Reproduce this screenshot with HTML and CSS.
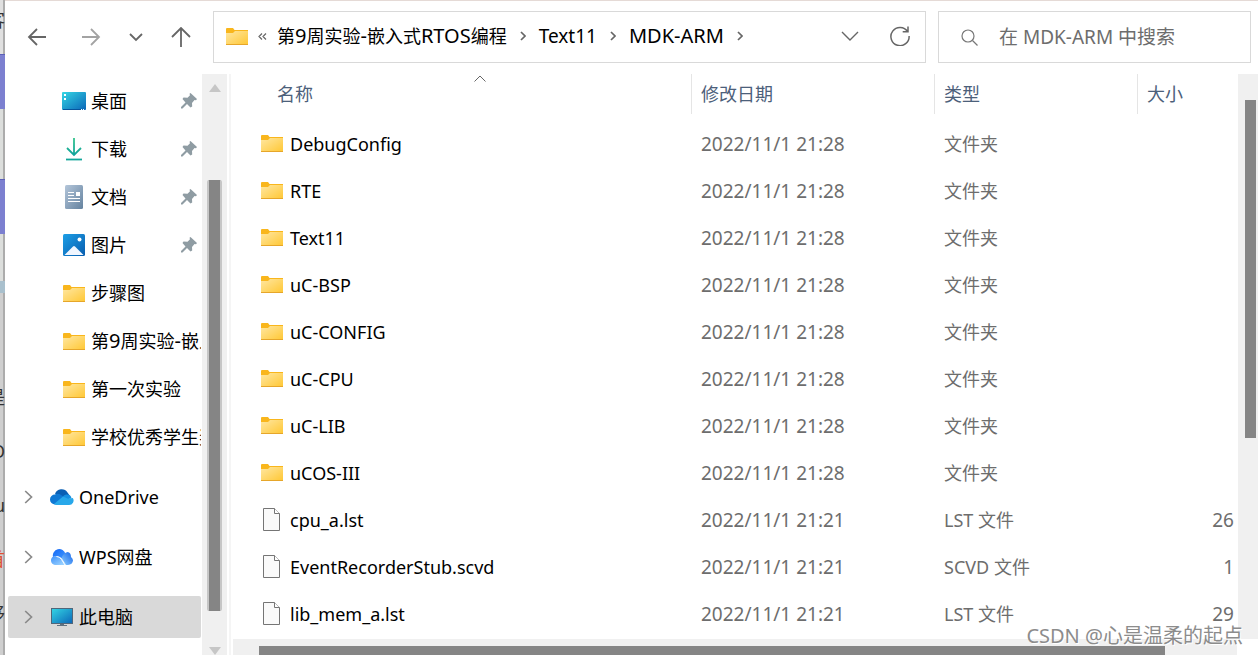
FILE: index.html
```
<!DOCTYPE html>
<html lang="zh-CN">
<head>
    <meta charset="UTF-8">
    <meta name="viewport" content="width=device-width, initial-scale=1.0">
    <title>MDK-ARM</title>
    <link rel="stylesheet" href="styles.css">
</head>
<body>
    <!-- Shared icons -->
    <svg class="sprite" width="0" height="0" aria-hidden="true">
        <defs>
            <linearGradient id="gFolder" x1="0" y1="0" x2="1" y2="1">
                <stop offset="0" stop-color="#ffe7a2"/><stop offset="1" stop-color="#ffc733"/>
            </linearGradient>
            <linearGradient id="gDesk" x1="0" y1="0" x2="1" y2="1">
                <stop offset="0" stop-color="#34d6e4"/><stop offset="1" stop-color="#0b66b8"/>
            </linearGradient>
            <linearGradient id="gDown" x1="0" y1="0" x2="0" y2="1">
                <stop offset="0" stop-color="#35c48d"/><stop offset="1" stop-color="#0fa39b"/>
            </linearGradient>
            <linearGradient id="gDoc" x1="0" y1="0" x2="1" y2="1">
                <stop offset="0" stop-color="#b4c6da"/><stop offset="1" stop-color="#64829f"/>
            </linearGradient>
            <linearGradient id="gPic" x1="0" y1="0" x2="1" y2="1">
                <stop offset="0" stop-color="#1d9fe6"/><stop offset="1" stop-color="#085cae"/>
            </linearGradient>
            <linearGradient id="gWps" x1="0" y1="0" x2="1" y2="1">
                <stop offset="0" stop-color="#1668f5"/><stop offset="1" stop-color="#3d97ff"/>
            </linearGradient>
            <linearGradient id="gWps2" x1="0" y1="0" x2="1" y2="1">
                <stop offset="0" stop-color="#3f92fb"/><stop offset="1" stop-color="#a8dbff"/>
            </linearGradient>
            <linearGradient id="gWps3" x1="1" y1="0" x2="0" y2="1">
                <stop offset="0" stop-color="#1263ea"/><stop offset="1" stop-color="#8fd0ff"/>
            </linearGradient>
        </defs>
        <symbol id="folder" viewBox="0 0 22 17">
            <path d="M0 1q0-1 1-1h6l1.500 2H22v4H0z" fill="#f9b61c"/>
            <path d="M0 5h7l2-2h13v14H0z" fill="url(#gFolder)"/>
            <path d="M0 16h22v1H0z" fill="#e6a62a"/>
        </symbol>
        <symbol id="file" viewBox="0 0 18 23">
            <path d="M.5.5h11l5 5v17H.5z" fill="#fafafa" stroke="#757575"/>
            <path d="M11.500.5v5h5" fill="#fff" stroke="#757575"/>
        </symbol>
        <symbol id="pin" viewBox="0 0 16 16">
            <path d="M9.500 0 16 6l-1 1.200-1.500-.2-2.500 3 .2 3.500-1.700 1L6 11l-4.500 4.500H0V14l4.500-4.500L1.500 6l1-1.500 4 .3L9 2.300 8.500.8z" fill="#8f9ca3"/>
        </symbol>
        <symbol id="chevron" viewBox="0 0 9 14">
            <path d="M1.200 1 7.500 7l-6.300 6" fill="none" stroke="#8a8a8a" stroke-width="1.700"/>
        </symbol>
        <symbol id="crumb" viewBox="0 0 6 10">
            <path d="m1 1 4 4-4 4" fill="none" stroke="#666" stroke-width="1.700"/>
        </symbol>
    </svg>

    <!-- Page behind the window -->
    <div class="backdrop" aria-hidden="true">
        <div class="slice slice-top"><span>客</span></div>
        <div class="slice slice-blue"></div>
        <div class="slice slice-gap"></div>
        <div class="slice slice-blue"></div>
        <div class="slice slice-gap"></div>
        <div class="slice slice-sky"></div>
        <div class="slice slice-text"><span>是</span><span>O</span><span>u</span><span class="red">首</span><span>移</span></div>
    </div>

    <div class="window">
        <header class="toolbar">
            <div class="nav">
                <button type="button" aria-label="后退">
                    <svg width="20" height="18" viewBox="0 0 20 18"><path d="M10 1 2 9l8 8M2 9h17" fill="none" stroke="#666" stroke-width="1.800"/></svg>
                </button>
                <button type="button" aria-label="前进">
                    <svg width="20" height="18" viewBox="0 0 20 18"><path d="m10 1 8 8-8 8m8-8H1" fill="none" stroke="#a3a3a3" stroke-width="1.800"/></svg>
                </button>
                <button type="button" class="nav-recent" aria-label="最近浏览的位置">
                    <svg width="14" height="9" viewBox="0 0 14 9"><path d="m1 1 6 6 6-6" fill="none" stroke="#666" stroke-width="1.800"/></svg>
                </button>
                <button type="button" aria-label="向上">
                    <svg width="20" height="20" viewBox="0 0 20 20"><path d="m1 10 9-9 9 9M10 1v19" fill="none" stroke="#666" stroke-width="1.800"/></svg>
                </button>
            </div>
            <div class="address">
                <svg class="icon-folder" width="22" height="17"><use href="#folder"/></svg>
                <svg class="more" width="9" height="7" viewBox="0 0 9 7"><path d="m4 .5-3 3 3 3m4-6-3 3 3 3" fill="none" stroke="#666" stroke-width="1.200"/></svg>
                <nav class="crumbs" aria-label="路径">
                    <a href="#">第<span class="latin">9</span>周实验<span class="latin">-</span>嵌入式<span class="latin">RTOS</span>编程</a>
                    <svg width="6" height="10"><use href="#crumb"/></svg>
                    <a href="#" class="latin-small">Text11</a>
                    <svg width="6" height="10"><use href="#crumb"/></svg>
                    <a href="#" class="latin">MDK-ARM</a>
                    <svg width="6" height="10"><use href="#crumb"/></svg>
                </nav>
                <button type="button" aria-label="以前的位置">
                    <svg width="18" height="10" viewBox="0 0 18 10"><path d="m1 1 8 8 8-8" fill="none" stroke="#666" stroke-width="1.400"/></svg>
                </button>
                <button type="button" aria-label="刷新">
                    <svg width="20" height="20" viewBox="0 0 20 20"><path d="M17.600 5.500A9.100 9.100 0 1 0 19.100 10M18 .5v5.300h-5.300" fill="none" stroke="#666" stroke-width="1.500"/></svg>
                </button>
            </div>
            <div class="search">
                <label for="search" aria-label="搜索">
                    <svg width="17" height="17" viewBox="0 0 17 17"><circle cx="7" cy="7" r="6" fill="none" stroke="#777" stroke-width="1.200"/><path d="m11.500 11.500 5 5" stroke="#777" stroke-width="1.200"/></svg>
                </label>
                <input type="text" id="search" placeholder="在 MDK-ARM 中搜索">
            </div>
        </header>

        <div class="content">
            <nav class="sidebar" aria-label="导航窗格">
                <ul class="quick">
                    <li><a href="#">
                        <svg width="24" height="18" viewBox="0 0 24 18"><rect width="24" height="18" rx="1" fill="url(#gDesk)"/><path d="M2 2h2v2H2zm0 4h2v2H2z" fill="#fff"/><path d="M1 17h18v1H1z" fill="#07549c"/><path d="M19 17h1v1h-1zm2 0h1v1h-1z" fill="#fff"/></svg>
                        <span>桌面</span><svg class="pin" width="16" height="16"><use href="#pin"/></svg></a></li>
                    <li><a href="#">
                        <svg width="24" height="24" viewBox="0 0 24 24"><path d="M12 1v17M5 11l7 7 7-7" fill="none" stroke="url(#gDown)" stroke-width="1.800"/><path d="M4 22.500h16" stroke="#12a69a" stroke-width="1.800"/></svg>
                        <span>下载</span><svg class="pin" width="16" height="16"><use href="#pin"/></svg></a></li>
                    <li><a href="#">
                        <svg width="24" height="24" viewBox="0 0 24 24"><rect x="3" width="18" height="24" rx="1.500" fill="url(#gDoc)"/><path d="M6 7.500h6M6 10.500h6M6 13.500h12M6 16.500h12" stroke="#fff"/><path d="M14 7h4v4h-4z" fill="#fff"/></svg>
                        <span>文档</span><svg class="pin" width="16" height="16"><use href="#pin"/></svg></a></li>
                    <li><a href="#">
                        <svg width="24" height="22" viewBox="0 0 24 22"><rect x="1" width="22" height="22" rx="1.500" fill="url(#gPic)"/><path d="m2.500 21 8.500-8.500q1-1 2 0L21.500 21z" fill="#f0f6ff"/><circle cx="17.500" cy="5.500" r="2" fill="#fff"/></svg>
                        <span>图片</span><svg class="pin" width="16" height="16"><use href="#pin"/></svg></a></li>
                    <li><a href="#"><svg class="icon-folder" width="24" height="17"><use href="#folder"/></svg><span>步骤图</span></a></li>
                    <li><a href="#"><svg class="icon-folder" width="24" height="17"><use href="#folder"/></svg><span>第<b class="latin">9</b>周实验<b class="latin">-</b>嵌入式RTOS编程</span></a></li>
                    <li><a href="#"><svg class="icon-folder" width="24" height="17"><use href="#folder"/></svg><span>第一次实验</span></a></li>
                    <li><a href="#"><svg class="icon-folder" width="24" height="17"><use href="#folder"/></svg><span>学校优秀学生奖</span></a></li>
                </ul>
                <ul class="places">
                    <li><a href="#">
                        <svg width="9" height="14"><use href="#chevron"/></svg>
                        <svg class="place-icon" width="24" height="16" viewBox="0 0 24 16"><path d="M5 5a7 7 0 0 1 12.500-1.500L20 7l-8 3-5-4z" fill="#0a5fb4"/><path d="M5 15.500A5 5 0 0 1 5 5.500q3-1.500 6 .5l7 4.500L7 15z" fill="#0f78d4"/><path d="M16 5.500q5-.5 5.500 4l-6 1L13 7.500q1-1.500 3-2z" fill="#178fe0"/><path d="M4 15q1 1 2.500 1H19a4.500 4.500 0 0 0 3.800-7L18 9.800 13 7.500z" fill="#28a8ea"/></svg>
                        <span>OneDrive</span></a></li>
                    <li><a href="#">
                        <svg width="9" height="14"><use href="#chevron"/></svg>
                        <svg class="place-icon" width="24" height="16" viewBox="0 0 24 16"><path d="M3 8a6.300 6.300 0 0 1 12.500-3L13 10q-5-4-10-2z" fill="url(#gWps)"/><path d="M11.500 9q2-5 6-6 3.500.5 3.500 5 2 1.500 2 3.500-.5 4-5 4.500h-2z" fill="url(#gWps3)"/><path d="M5 16a4.500 4.500 0 0 1-1.500-8.500Q8 6.500 11 9.500l5 6.500z" fill="url(#gWps2)"/><path d="M6.500 7.500q3.500 0 5 3L15 16" fill="none" stroke="#fff"/></svg>
                        <span>WPS网盘</span></a></li>
                    <li><a href="#" class="selected">
                        <svg width="9" height="14"><use href="#chevron"/></svg>
                        <svg class="place-icon" width="24" height="18" viewBox="0 0 24 18"><rect x="1.500" y=".5" width="21" height="15" fill="url(#gDesk)" stroke="#50667a"/><path d="M10 16h4v1h3v1H7v-1h3z" fill="#60717f"/></svg>
                        <span>此电脑</span></a></li>
                </ul>
            </nav>
            <div class="vscroll side-scroll" aria-hidden="true">
                <span class="arrow-up"></span>
                <span class="thumb"></span>
                <span class="arrow-down"></span>
            </div>

            <main class="files">
                <div class="files-body">
                    <div class="list">
                        <table>
                            <thead>
                                <tr>
                                    <th class="col-name">名称<svg class="sort" width="12" height="7" viewBox="0 0 12 7"><path d="m.5 6.500 5.500-5.500 5.500 5.500" fill="none" stroke="#666"/></svg></th>
                                    <th class="col-date">修改日期</th>
                                    <th class="col-type">类型</th>
                                    <th class="col-size">大小</th>
                                </tr>
                            </thead>
                            <tbody>
                                <tr><td><a href="#"><svg class="icon-folder" width="22" height="17"><use href="#folder"/></svg>DebugConfig</a></td><td class="date">2022/11/1 21:28</td><td>文件夹</td><td></td></tr>
                                <tr><td><a href="#"><svg class="icon-folder" width="22" height="17"><use href="#folder"/></svg>RTE</a></td><td class="date">2022/11/1 21:28</td><td>文件夹</td><td></td></tr>
                                <tr><td><a href="#"><svg class="icon-folder" width="22" height="17"><use href="#folder"/></svg>Text11</a></td><td class="date">2022/11/1 21:28</td><td>文件夹</td><td></td></tr>
                                <tr><td><a href="#"><svg class="icon-folder" width="22" height="17"><use href="#folder"/></svg>uC-BSP</a></td><td class="date">2022/11/1 21:28</td><td>文件夹</td><td></td></tr>
                                <tr><td><a href="#"><svg class="icon-folder" width="22" height="17"><use href="#folder"/></svg>uC-CONFIG</a></td><td class="date">2022/11/1 21:28</td><td>文件夹</td><td></td></tr>
                                <tr><td><a href="#"><svg class="icon-folder" width="22" height="17"><use href="#folder"/></svg>uC-CPU</a></td><td class="date">2022/11/1 21:28</td><td>文件夹</td><td></td></tr>
                                <tr><td><a href="#"><svg class="icon-folder" width="22" height="17"><use href="#folder"/></svg>uC-LIB</a></td><td class="date">2022/11/1 21:28</td><td>文件夹</td><td></td></tr>
                                <tr><td><a href="#"><svg class="icon-folder" width="22" height="17"><use href="#folder"/></svg>uCOS-III</a></td><td class="date">2022/11/1 21:28</td><td>文件夹</td><td></td></tr>
                                <tr><td><a href="#"><svg class="icon-file" width="18" height="23"><use href="#file"/></svg>cpu_a.lst</a></td><td class="date">2022/11/1 21:21</td><td>LST 文件</td><td class="size">26</td></tr>
                                <tr><td><a href="#"><svg class="icon-file" width="18" height="23"><use href="#file"/></svg>EventRecorderStub.scvd</a></td><td class="date">2022/11/1 21:21</td><td>SCVD 文件</td><td class="size">1</td></tr>
                                <tr><td><a href="#"><svg class="icon-file" width="18" height="23"><use href="#file"/></svg>lib_mem_a.lst</a></td><td class="date">2022/11/1 21:21</td><td>LST 文件</td><td class="size">29</td></tr>
                            </tbody>
                        </table>
                    </div>
                    <div class="vscroll list-scroll" aria-hidden="true"><span class="thumb"></span></div>
                </div>
                <div class="hscroll" aria-hidden="true"><span class="thumb"></span></div>
            </main>
        </div>
        <div class="watermark">CSDN @心是温柔的起点</div>
    </div>
</body>
</html>
```

FILE: styles.css
```
* {
    box-sizing: border-box;
}

body {
    margin: 0;
    height: 100vh;
    display: flex;
    overflow: hidden;
    font-family: "Noto Sans", "Noto Sans CJK SC", sans-serif;
    font-size: 18px;
    line-height: 24px;
    color: #000000;
}

.sprite {
    position: absolute;
}

svg {
    flex: none;
}

a {
    color: inherit;
    text-decoration: none;
}

ul {
    list-style: none;
    margin: 0;
    padding: 0;
}

button {
    display: flex;
    align-items: center;
    justify-content: center;
    padding: 0;
    border: none;
    background: none;
    cursor: pointer;
}

.latin {
    font-size: 20px;
    font-weight: normal;
}

.latin-small {
    font-size: 19px;
}

/* Page behind the window */
.backdrop {
    width: 5px;
    flex: none;
    display: flex;
    flex-direction: column;
    background-color: #cfcfcf;
    color: #333333;
}

.slice {
    display: flex;
    flex-direction: column;
    align-items: flex-end;
    overflow: hidden;
    flex: none;
    box-shadow: inset -2px 0 #acacac;
}

.slice-top {
    height: 54px;
    padding-top: 8px;
    background-color: #e0e0e0;
}

.slice-blue {
    height: 55px;
    background-color: #7c80d0;
    border-top: 1px solid #5c60b8;
    box-shadow: none;
}

.slice-gap {
    height: 70px;
    background-color: #dcdedc;
}

.slice-gap ~ .slice-gap {
    height: 47px;
}

.slice-sky {
    height: 12px;
    background-color: #a9c0cd;
    box-shadow: none;
}

.slice-text {
    flex: 1;
    padding-top: 92px;
    gap: 30px;
}

.red {
    color: #e05030;
}

.window {
    flex: 1;
    min-width: 0;
    display: flex;
    flex-direction: column;
    position: relative;
    background-color: #ffffff;
    border-top: 1px solid #e5dad6;
}

/* Toolbar */
.toolbar {
    display: flex;
    height: 73px;
    flex: none;
    padding: 10px 7px 11px 16px;
}

.nav {
    display: flex;
    width: 192px;
    gap: 22px;
}

.nav button {
    width: 32px;
}

.nav .nav-recent {
    width: 14px;
}

.address, .search {
    display: flex;
    align-items: center;
    border: 1px solid #d9d9d9;
}

.address {
    flex: 1;
    padding: 0 15px 2px 12px;
}

.more {
    margin: 0 10px 0 10px;
}

.crumbs {
    flex: 1;
    display: flex;
    align-items: center;
    gap: 13px;
    white-space: nowrap;
}

.address button {
    width: 20px;
    height: 32px;
    margin-left: 30px;
}

.search {
    width: 313px;
    margin-left: 12px;
    padding-left: 22px;
}

.search label {
    display: flex;
}

.search input {
    flex: 1;
    min-width: 0;
    margin-left: 21px;
    padding: 0;
    border: none;
    outline: none;
    font: inherit;
    font-size: 19px;
}

.search input::placeholder {
    color: #6d6d6d;
    opacity: 1;
}

/* Sidebar */
.content {
    flex: 1;
    min-height: 0;
    display: flex;
}

.sidebar {
    width: 197px;
    flex: none;
    overflow: hidden;
    padding: 3px 1px 0 3px;
}

.sidebar a {
    display: flex;
    align-items: center;
    white-space: nowrap;
}

.sidebar span {
    overflow: hidden;
}

.quick a {
    height: 48px;
    padding-left: 54px;
    gap: 5px;
}

.quick .pin {
    margin: 0 4px 0 auto;
}

.places {
    display: flex;
    flex-direction: column;
    gap: 18px;
    margin-top: 15px;
}

.places a {
    height: 42px;
    padding-left: 16px;
    border-radius: 2px;
}

.place-icon {
    margin: 0 5px 0 17px;
}

.selected {
    background-color: #d9d9d9;
}

/* Scrollbars */
.vscroll {
    flex: none;
    display: flex;
    flex-direction: column;
    align-items: center;
    background-color: #f0f0f0;
}

.thumb {
    background-color: #858585;
}

.side-scroll {
    width: 25px;
    padding-top: 10px;
}

.side-scroll .thumb {
    width: 15px;
    height: 432px;
    margin: 88px 0 36px;
    border: solid #c6c6c6;
    border-width: 0 2px;
    border-radius: 2px;
}

.arrow-up, .arrow-down {
    border: 6px solid transparent;
}

.arrow-up {
    border-top: none;
    border-bottom: 8px solid #c6c6c6;
}

.arrow-down {
    border-bottom: none;
    border-top: 8px solid #c6c6c6;
}

.list-scroll {
    width: 20px;
    padding: 26px 2px 0 7px;
}

.list-scroll .thumb {
    width: 11px;
    height: 338px;
}

.hscroll {
    height: 16px;
    flex: none;
    margin-right: 21px;
    padding: 7px 72px 0 26px;
    background-color: #f0f0f0;
}

.hscroll .thumb {
    display: block;
    height: 9px;
}

/* File list */
.files {
    flex: 1;
    min-width: 0;
    display: flex;
    flex-direction: column;
    margin-left: 2px;
    border-left: 2px solid #f5f5f5;
    padding-left: 2px;
}

.files-body {
    flex: 1;
    min-height: 0;
    display: flex;
}

.list {
    flex: 1;
    min-width: 0;
    overflow: hidden;
}

table {
    width: 100%;
    table-layout: fixed;
    border-collapse: separate;
    border-spacing: 0;
}

th {
    height: 40px;
    padding: 0 9px;
    border-left: 1px solid #e5e5e5;
    font-weight: normal;
    text-align: left;
    color: #4c607a;
}

.col-name {
    position: relative;
    padding-left: 44px;
    border-left: none;
}

.col-date {
    width: 243px;
}

.col-type {
    width: 203px;
}

.col-size {
    width: 101px;
}

.sort {
    position: absolute;
    top: 1px;
    left: calc(50% + 12px);
}

tbody::before {
    content: "";
    display: block;
    height: 6px;
}

td {
    height: 47px;
    padding: 0 0 0 10px;
    color: #6d6d6d;
}

td:first-child {
    padding-left: 28px;
    color: #000000;
}

td a {
    display: flex;
    align-items: center;
    gap: 7px;
}

.icon-file {
    margin: 0 2px;
}

.date, .size {
    font-size: 19px;
}

.size {
    padding-right: 4px;
    text-align: right;
}

.watermark {
    position: absolute;
    right: 15px;
    bottom: 5px;
    font-size: 20px;
    line-height: 28px;
    color: #8c8c8c;
    text-shadow: 1px 1px 0 #ffffff;
}
```
